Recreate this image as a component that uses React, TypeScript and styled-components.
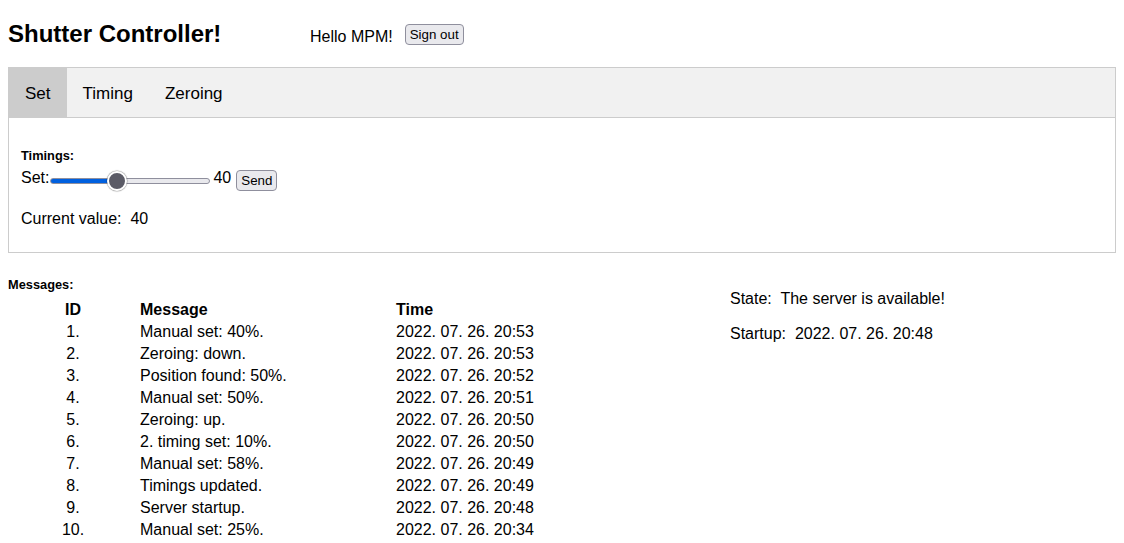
import React, { useState } from "react";
import styled, { createGlobalStyle, css } from "styled-components";

const GlobalStyle = createGlobalStyle`
  html, body {
    margin: 0;
    padding: 0;
    background: #ffffff;
  }
  body {
    font-family: "Liberation Sans", Arial, sans-serif;
    font-size: 16px;
    color: #000000;
  }
`;

const Page = styled.div`
  padding: 8px;
`;

const Header = styled.header`
  display: flex;
  align-items: baseline;
  margin-top: 12px;
  height: 28px;
`;

const Title = styled.h1`
  margin: 0;
  width: 302px;
  font-size: 24px;
  line-height: 28px;
  font-weight: bold;
`;

const Greeting = styled.span`
  font-size: 16px;
  line-height: 28px;
`;

const NativeButton = styled.button<{ $ml?: number }>`
  box-sizing: border-box;
  height: 21px;
  padding: 0 4px;
  margin: 0 0 0 ${(p) => p.$ml ?? 0}px;
  font-family: "Liberation Sans", Arial, sans-serif;
  font-size: 13.333px;
  line-height: 19px;
  color: #000000;
  background: #e9e9ed;
  border: 1px solid #8f8f9d;
  border-radius: 4px;
  cursor: pointer;
  &:hover {
    background: #d0d0d7;
  }
`;

const SignOutButton = styled(NativeButton)`
  align-self: flex-start;
  margin-top: 4px;
`;

const TabBox = styled.section`
  margin-top: 19px;
`;

const TabBar = styled.div`
  display: flex;
  border: 1px solid #ccc;
  background: #f1f1f1;
`;

const TabButton = styled.button<{ $active?: boolean }>`
  background: inherit;
  border: none;
  outline: none;
  margin: 0;
  padding: 15px 16px 13px;
  font-family: "Liberation Sans", Arial, sans-serif;
  font-size: 17px;
  line-height: 21px;
  color: #000000;
  cursor: pointer;
  transition: 0.3s;
  &:hover {
    background: #ddd;
  }
  ${(p) =>
    p.$active &&
    css`
      background: #ccc;
      &:hover {
        background: #ccc;
      }
    `}
`;

const TabPanel = styled.div`
  padding: 6px 12px;
  border: 1px solid #ccc;
  border-top: none;
`;

const FieldLabel = styled.div<{ $top?: number; $bottom?: number }>`
  margin-top: ${(p) => p.$top ?? 0}px;
  margin-bottom: ${(p) => p.$bottom ?? 0}px;
  font-size: 12.8px;
  line-height: 15px;
  font-weight: bold;
`;

const SliderRow = styled.div`
  display: flex;
  align-items: center;
  height: 23px;
`;

const RowText = styled.span<{ $ml?: number }>`
  align-self: flex-start;
  margin-left: ${(p) => p.$ml ?? 0}px;
  font-size: 16px;
  line-height: 18px;
`;

const Range = styled.input<{ $fill: number }>`
  -webkit-appearance: none;
  appearance: none;
  width: 160px;
  height: 20px;
  margin: 0 0 0 1px;
  padding: 0;
  background: transparent;
  cursor: pointer;

  &::-webkit-slider-runnable-track {
    box-sizing: border-box;
    height: 6px;
    border: 1px solid #8f8f9d;
    border-radius: 3px;
    background: linear-gradient(
      to right,
      #0060df 0%,
      #0060df ${(p) => p.$fill}%,
      #e9e9ed ${(p) => p.$fill}%,
      #e9e9ed 100%
    );
  }
  &::-webkit-slider-thumb {
    -webkit-appearance: none;
    appearance: none;
    box-sizing: border-box;
    width: 20px;
    height: 20px;
    margin-top: -8px;
    border-radius: 50%;
    background: #5b5b66;
    border: 2px solid #ffffff;
    box-shadow: 0 0 1px 0.5px rgba(0, 0, 0, 0.35);
  }
`;

const ValueLine = styled.div`
  margin: 18px 0;
  font-size: 16px;
  line-height: 18px;
`;

const Lower = styled.section`
  display: grid;
  grid-template-columns: 722px 1fr;
  margin-top: 24px;
`;

const MessageTable = styled.div`
  display: grid;
  grid-template-columns: 130px 256px 1fr;
  font-size: 16px;
  line-height: 22px;
`;

const Cell = styled.div<{ $center?: boolean; $head?: boolean }>`
  text-align: ${(p) => (p.$center ? "center" : "left")};
  padding-left: ${(p) => (p.$center ? 0 : 2)}px;
  font-weight: ${(p) => (p.$head ? "bold" : "normal")};
  white-space: nowrap;
`;

const StatusColumn = styled.div`
  padding-top: 13px;
`;

const StatusLine = styled.div`
  font-size: 16px;
  line-height: 18px;
  margin-bottom: 17px;
`;

const messages: [number, string, string][] = [
  [1, "Manual set: 40%.", "2022. 07. 26. 20:53"],
  [2, "Zeroing: down.", "2022. 07. 26. 20:53"],
  [3, "Position found: 50%.", "2022. 07. 26. 20:52"],
  [4, "Manual set: 50%.", "2022. 07. 26. 20:51"],
  [5, "Zeroing: up.", "2022. 07. 26. 20:50"],
  [6, "2. timing set: 10%.", "2022. 07. 26. 20:50"],
  [7, "Manual set: 58%.", "2022. 07. 26. 20:49"],
  [8, "Timings updated.", "2022. 07. 26. 20:49"],
  [9, "Server startup.", "2022. 07. 26. 20:48"],
  [10, "Manual set: 25%.", "2022. 07. 26. 20:34"],
];

const tabs = ["Set", "Timing", "Zeroing"];

export default function App() {
  const [active, setActive] = useState("Set");
  const [value, setValue] = useState(40);
  const thumb = 20;
  const width = 160;
  const fillPct = ((thumb / 2 + (value / 100) * (width - thumb)) / width) * 100;

  return (
    <>
      <GlobalStyle />
      <Page>
        <Header>
          <Title>Shutter Controller!</Title>
          <Greeting>Hello MPM!</Greeting>
          <SignOutButton $ml={12}>Sign out</SignOutButton>
        </Header>

        <TabBox>
          <TabBar>
            {tabs.map((t) => (
              <TabButton key={t} $active={active === t} onClick={() => setActive(t)}>
                {t}
              </TabButton>
            ))}
          </TabBar>
          <TabPanel>
            <FieldLabel $top={24} $bottom={6}>
              Timings:
            </FieldLabel>
            <SliderRow>
              <RowText>Set:</RowText>
              <Range
                type="range"
                min={0}
                max={100}
                value={value}
                $fill={fillPct}
                onChange={(e) => setValue(Number(e.target.value))}
              />
              <RowText $ml={3}>{value}</RowText>
              <NativeButton $ml={5}>Send</NativeButton>
            </SliderRow>
            <ValueLine>Current value:{"\u00a0 "}40</ValueLine>
          </TabPanel>
        </TabBox>

        <Lower>
          <div>
            <FieldLabel $bottom={7}>Messages:</FieldLabel>
            <MessageTable>
              <Cell $center $head>
                ID
              </Cell>
              <Cell $head>Message</Cell>
              <Cell $head>Time</Cell>
              {messages.map(([id, msg, time]) => (
                <React.Fragment key={id}>
                  <Cell $center>{id}.</Cell>
                  <Cell>{msg}</Cell>
                  <Cell>{time}</Cell>
                </React.Fragment>
              ))}
            </MessageTable>
          </div>
          <StatusColumn>
            <StatusLine>State:{"\u00a0 "}The server is available!</StatusLine>
            <StatusLine>Startup:{"\u00a0 "}2022. 07. 26. 20:48</StatusLine>
          </StatusColumn>
        </Lower>
      </Page>
    </>
  );
}
